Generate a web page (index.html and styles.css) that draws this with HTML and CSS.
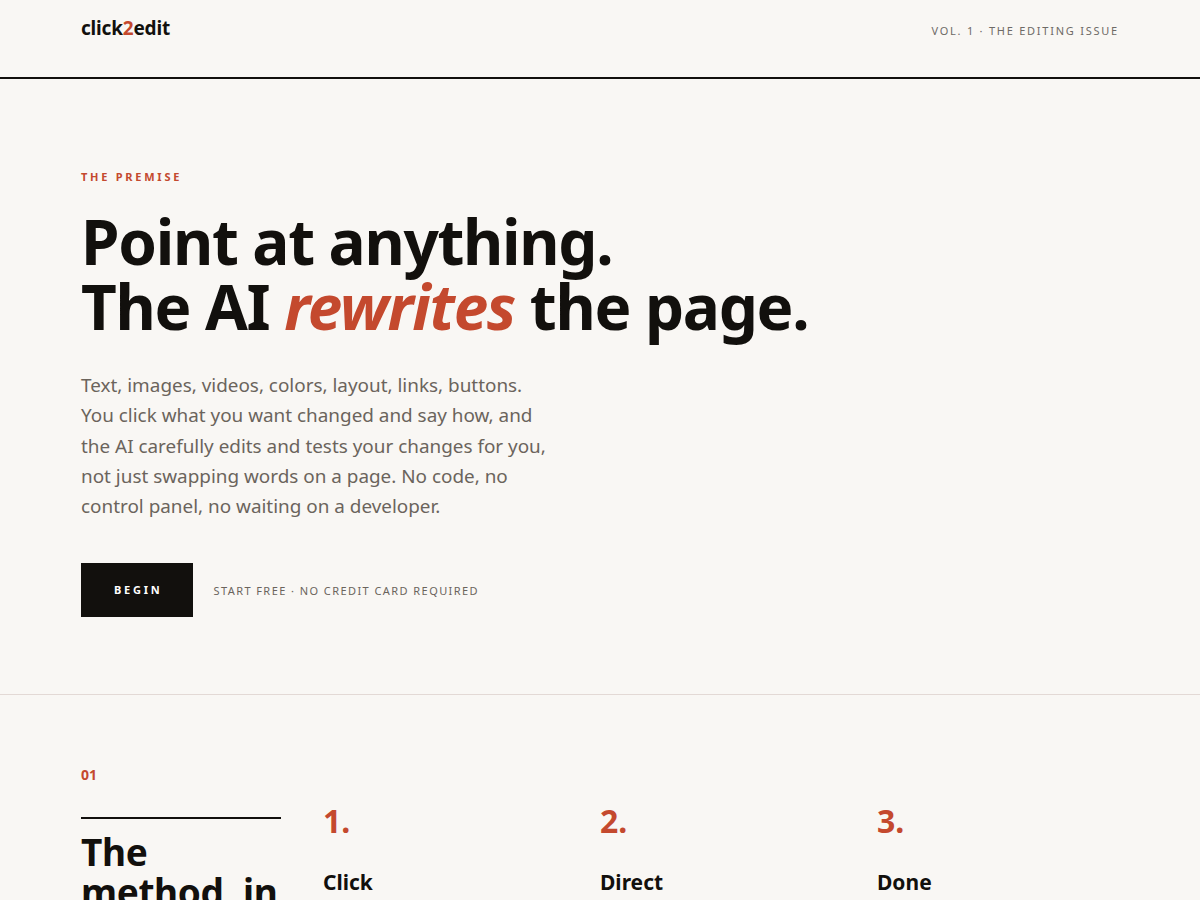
FILE: index.html
```html
<!DOCTYPE html>
<html lang="en">
<head>
    <meta charset="UTF-8">
    <meta name="viewport" content="width=device-width, initial-scale=1.0">
    <title>click2edit - The Editing Issue</title>
    <link rel="stylesheet" href="styles.css">
</head>
<body>

    <header class="masthead">
        <div class="wrap masthead-inner">
            <a class="logo" href="#">click<span class="accent">2</span>edit</a>
            <span class="issue">Vol. 1 &middot; The Editing Issue</span>
        </div>
    </header>

    <!-- Hero -->
    <section class="hero">
        <div class="wrap">
            <p class="kicker">The Premise</p>
            <h1 class="headline">Point at anything.<br>The AI <em>rewrites</em> the page.</h1>
            <p class="lede">Text, images, videos, colors, layout, links, buttons. You click what you want changed and say how, and the AI carefully edits and tests your changes for you, not just swapping words on a page. No code, no control panel, no waiting on a developer.</p>
            <div class="cta-row">
                <a class="btn" href="#">Begin</a>
                <span class="cta-note">Start free &middot; No credit card required</span>
            </div>
        </div>
    </section>

    <!-- Method -->
    <section class="method">
        <div class="wrap">
            <p class="section-no">01</p>
            <div class="method-grid">
                <h2 class="method-title">The method, in three steps.</h2>
                <div class="step">
                    <div class="step-no">1.</div>
                    <h3 class="step-title">Click</h3>
                    <p class="step-text">Point at any element on your live page.</p>
                </div>
                <div class="step">
                    <div class="step-no">2.</div>
                    <h3 class="step-title">Direct</h3>
                    <p class="step-text">Say what you want in plain words.</p>
                </div>
                <div class="step">
                    <div class="step-no">3.</div>
                    <h3 class="step-title">Done</h3>
                    <p class="step-text">The AI edits, tests and publishes it.</p>
                </div>
            </div>
        </div>
    </section>

</body>
</html>
```

FILE: styles.css
```css
* {
    margin: 0;
    padding: 0;
    box-sizing: border-box;
}

body {
    font-family: 'Noto Sans', 'Open Sans', sans-serif;
    background-color: #f9f7f4;
    color: #12100d;
}

a {
    color: inherit;
    text-decoration: none;
}

.wrap {
    max-width: 1040px;
    margin: 0 auto;
    padding: 0 1px;
}

/* Masthead */
.masthead {
    border-bottom: 2px solid #12100d;
    height: 79px;
}

.masthead-inner {
    display: flex;
    justify-content: space-between;
    align-items: center;
    padding-top: 14px;
}

.logo {
    font-size: 19px;
    font-weight: 700;
    letter-spacing: -0.01em;
    line-height: 28px;
}

.accent {
    color: #c4492e;
}

.issue {
    font-size: 11px;
    letter-spacing: 0.16em;
    text-transform: uppercase;
    color: #6e6a66;
    margin-top: 4px;
}

/* Hero */
.hero {
    padding: 90px 0 77px;
    border-bottom: 1px solid #e3d9d5;
}

.kicker {
    font-size: 11px;
    font-weight: 700;
    letter-spacing: 0.25em;
    text-transform: uppercase;
    color: #c4492e;
    margin-bottom: 25px;
}

.headline {
    font-size: 62px;
    font-weight: 700;
    line-height: 65px;
    letter-spacing: -0.021em;
    margin-bottom: 31px;
}

.headline em {
    color: #c4492e;
    font-style: italic;
}

.lede {
    font-size: 18.9px;
    line-height: 30.3px;
    color: #6b645c;
    max-width: 475px;
    margin-bottom: 42px;
}

.cta-row {
    display: flex;
    align-items: center;
    gap: 20px;
}

.btn {
    display: inline-block;
    background-color: #12100d;
    color: #fff;
    font-size: 11px;
    font-weight: 700;
    letter-spacing: 0.25em;
    text-transform: uppercase;
    padding: 19px 31px 19px 33px;
    line-height: 16px;
}

.cta-note {
    font-size: 11px;
    letter-spacing: 0.13em;
    text-transform: uppercase;
    color: #6b645c;
}

/* Method */
.method {
    padding: 70px 0 80px;
}

.section-no {
    font-size: 14px;
    font-weight: 700;
    color: #c4492e;
    margin-bottom: 26px;
}

.method-grid {
    display: grid;
    grid-template-columns: 200px repeat(3, 235px);
    column-gap: 42px;
}

.method-title {
    border-top: 2px solid #12100d;
    margin-top: 7px;
    padding-top: 13px;
    font-size: 37px;
    font-weight: 700;
    line-height: 1.08;
    letter-spacing: -0.01em;
}

.step-no {
    font-size: 32px;
    font-weight: 700;
    color: #c4492e;
    line-height: 40px;
    margin-top: -9px;
    margin-bottom: 27px;
}

.step-title {
    font-size: 21px;
    font-weight: 700;
    line-height: 28px;
    margin-bottom: 10px;
}

.step-text {
    font-size: 16px;
    line-height: 1.6;
    color: #6b645c;
}
```
